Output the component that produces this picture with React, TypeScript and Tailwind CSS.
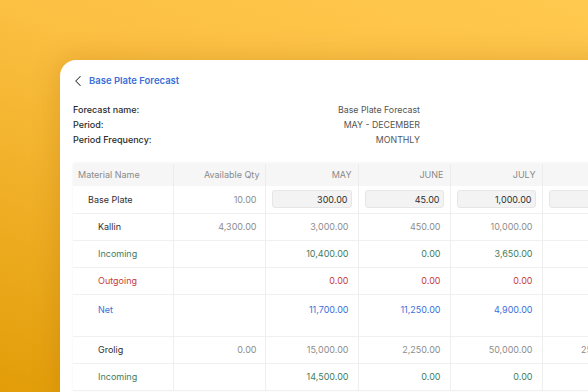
import { ChevronLeft } from "lucide-react"

type Row = {
  name: string
  kind: "head" | "item" | "in" | "out" | "net"
  avail?: string
  vals: string[]
}

const months = ["MAY", "JUNE", "JULY", "AUGUST"]

const rows: Row[] = [
  { name: "Base Plate", kind: "head", avail: "10.00", vals: ["300.00", "45.00", "1,000.00", "250.00"] },
  { name: "Kallin", kind: "item", avail: "4,300.00", vals: ["3,000.00", "450.00", "10,000.00", "800.00"] },
  { name: "Incoming", kind: "in", vals: ["10,400.00", "0.00", "3,650.00", "0.00"] },
  { name: "Outgoing", kind: "out", vals: ["0.00", "0.00", "0.00", "0.00"] },
  { name: "Net", kind: "net", vals: ["11,700.00", "11,250.00", "4,900.00", "900.00"] },
  { name: "Grolig", kind: "item", avail: "0.00", vals: ["15,000.00", "2,250.00", "50,000.00", "25,000.00"] },
  { name: "Incoming", kind: "in", vals: ["14,500.00", "0.00", "0.00", "0.00"] },
]

const tone = {
  head: "text-[#2f2f2f]",
  item: "text-[#8d8d8d]",
  in: "text-[#3f7d5e]",
  out: "text-[#c93b3b]",
  net: "text-[#3c6fd8]",
}

const nameTone = {
  head: "text-[#2f2f2f] pl-[15px]",
  item: "text-[#2f2f2f] pl-[25px]",
  in: "text-[#3f7d5e] pl-[25px]",
  out: "text-[#c93b3b] pl-[25px]",
  net: "text-[#3c6fd8] pl-[25px]",
}

export default function App() {
  return (
    <div
      className="w-[588px] h-[392px] overflow-hidden pl-[60px] pt-[60px] bg-[linear-gradient(200deg,#ffc94f_0%,#fcc043_35%,#e29d08_100%)]"
      style={{ fontFamily: "Inter, 'Noto Sans', sans-serif" }}
    >
      <div className="w-[560px] h-[340px] bg-white rounded-tl-[16px] shadow-[0_0_28px_rgba(160,95,0,0.28)] pt-[14px] pl-[13px] overflow-hidden">
        <div className="flex items-center h-[14px]">
          <ChevronLeft className="w-[18px] h-[18px] text-[#333] -ml-[4px]" strokeWidth={1.4} />
          <span className="ml-[2px] text-[9.5px] font-semibold text-[#3c6fd8]">Base Plate Forecast</span>
        </div>

        <div className="mt-[14px] w-[347px] text-[9px] leading-[15px]">
          {[
            ["Forecast name:", "Base Plate Forecast"],
            ["Period:", "MAY - DECEMBER"],
            ["Period Frequency:", "MONTHLY"],
          ].map(([k, v]) => (
            <div key={k} className="flex justify-between">
              <span className="font-medium text-[#2b2b2b]">{k}</span>
              <span className="text-[#555] text-[8.8px]">{v}</span>
            </div>
          ))}
        </div>

        <table className="mt-[17px] table-fixed border-collapse text-[9px] w-[560px] shadow-[0_-1px_3px_rgba(0,0,0,0.06)]">
          <colgroup>
            <col className="w-[100px]" />
            <col className="w-[92px]" />
            <col className="w-[93px]" />
            <col className="w-[92px]" />
            <col className="w-[92px]" />
            <col className="w-[92px]" />
          </colgroup>
          <thead>
            <tr className="h-[22px] bg-[#f6f6f6] text-[#8a8a8a]">
              <th className="text-left font-normal pl-[5px] border-r border-[#ececec]">Material Name</th>
              <th className="text-right font-normal pr-[5px] border-r border-[#ececec]">Available Qty</th>
              {months.map((m) => (
                <th key={m} className="text-right font-normal pr-[6px] border-r border-[#ececec]">
                  {m}
                </th>
              ))}
            </tr>
          </thead>
          <tbody>
            {rows.map((r, i) => (
              <tr
                key={i}
                className={`${r.kind === "net" ? "h-[42px] align-top" : "h-[27px]"} border-b border-[#f0f0f0]`}
              >
                <td className={`${nameTone[r.kind]} border-r border-[#efefef] ${r.kind === "net" ? "pt-[8px]" : ""}`}>
                  {r.name}
                </td>
                <td className="text-right pr-[8px] text-[#8d8d8d] border-r border-[#efefef]">{r.avail ?? ""}</td>
                {r.vals.map((v, j) =>
                  r.kind === "head" ? (
                    <td key={j} className="px-[6px] border-r border-[#efefef]">
                      <div className="h-[18px] rounded-[3px] bg-[#f3f3f3] border border-[#e6e6e6] flex items-center justify-end pr-[3px] text-[#2f2f2f]">
                        {v}
                      </div>
                    </td>
                  ) : (
                    <td
                      key={j}
                      className={`text-right pr-[9px] ${tone[r.kind]} border-r border-[#efefef] ${r.kind === "net" ? "pt-[8px]" : ""}`}
                    >
                      {v}
                    </td>
                  )
                )}
              </tr>
            ))}
          </tbody>
        </table>
      </div>
    </div>
  )
}
